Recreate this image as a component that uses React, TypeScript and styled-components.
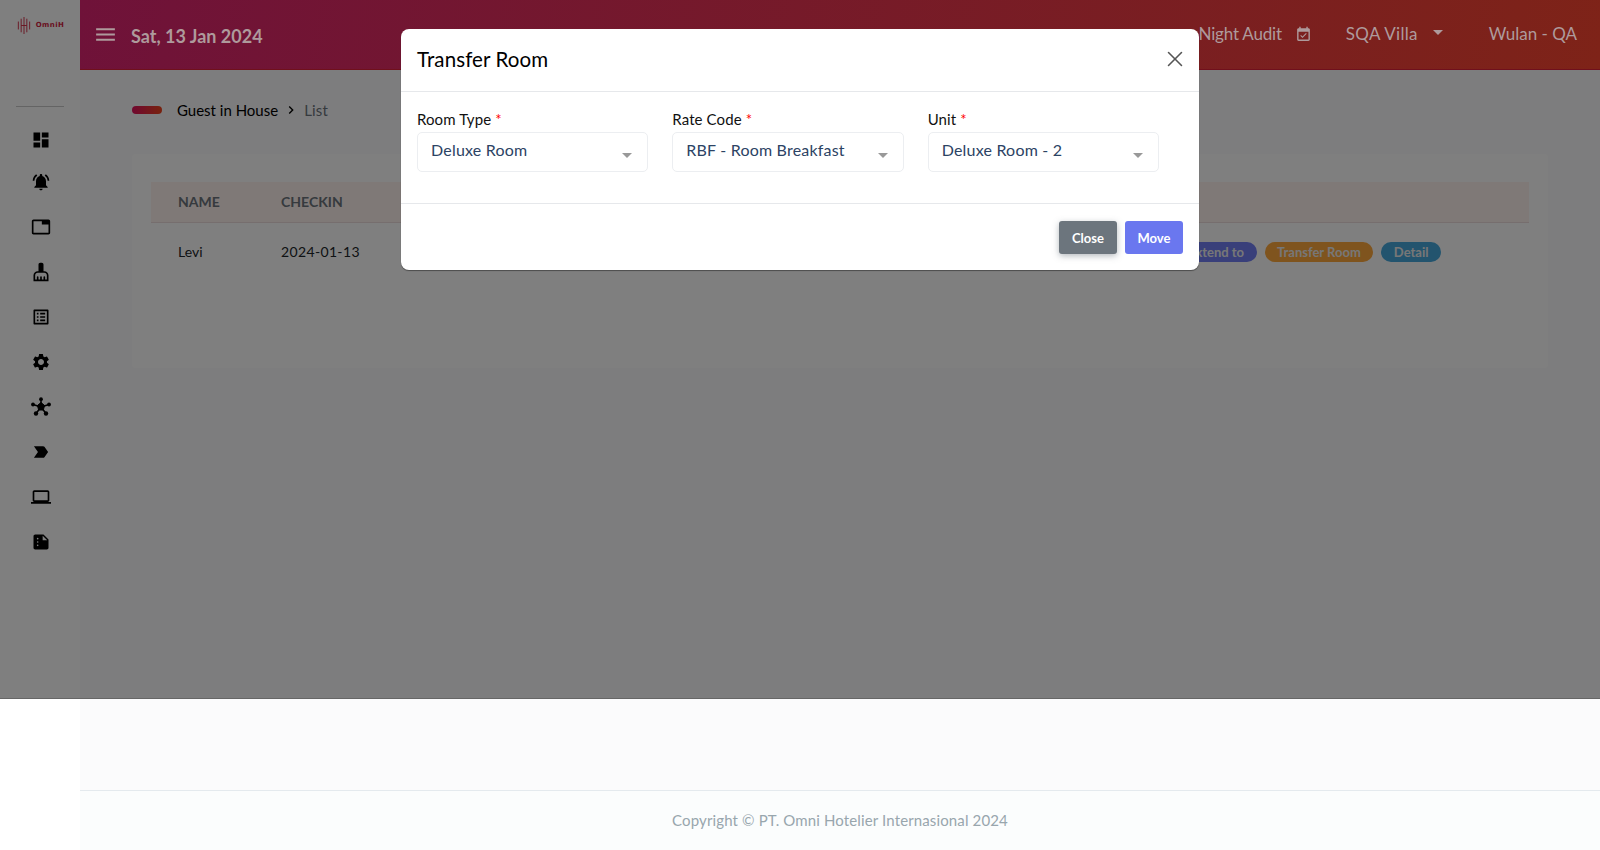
import styled, { createGlobalStyle } from "styled-components";
import { X } from "lucide-react";
import {
  MdChevronRight,
  MdCleaningServices,
  MdDashboard,
  MdEventAvailable,
  MdLabelImportant,
  MdLaptop,
  MdListAlt,
  MdMenu,
  MdNotificationsActive,
  MdSettings,
  MdSummarize,
  MdTab,
} from "react-icons/md";

const GlobalStyle = createGlobalStyle`
  * { box-sizing: border-box; }
  html, body { margin: 0; padding: 0; background: #fff; }
  body { font-family: "Lato", "Noto Sans", sans-serif; color: #212529; }
`;

const Page = styled.div`
  position: relative;
  display: flex;
  width: 1600px;
  height: 850px;
  overflow: hidden;
`;

const Sidebar = styled.aside`
  display: flex;
  flex-direction: column;
  align-items: center;
  width: 80px;
  flex-shrink: 0;
  background: #fff;
`;

const Logo = styled.div`
  display: flex;
  align-items: center;
  gap: 4px;
  height: 50px;
  color: #d2233f;
`;

const LogoText = styled.span`
  font-family: "DejaVu Sans", sans-serif;
  font-size: 7px;
  font-weight: 700;
  letter-spacing: 0.4px;
`;

const SideDivider = styled.hr`
  width: 48px;
  margin: 56px 0 11px;
  border: 0;
  border-top: 1px solid #c8c8c8;
`;

const SideIcon = styled.div`
  display: flex;
  align-items: center;
  justify-content: center;
  height: 45px;
  width: 100%;
  padding-left: 2px;
  font-size: 20px;
  color: #000;

  ${SideDivider} + & {
    height: 41px;
    padding-top: 2px;
  }
`;

const Main = styled.div`
  display: flex;
  flex: 1;
  flex-direction: column;
  min-width: 0;
  background: #fbfbfc;
`;

const TopBar = styled.header`
  position: relative;
  z-index: 20;
  display: flex;
  align-items: center;
  height: 70px;
  padding: 0 23px 0 16px;
  background: linear-gradient(100deg, #6f1239 0%, #7e2318 100%);
  border-bottom: 1px solid #70101c;
  color: #ae9a9c;
`;

const MenuButton = styled.div`
  display: flex;
  margin-left: -3px;
  font-size: 25px;
`;

const DateText = styled.span`
  margin: 3px 0 0 13px;
  font-size: 18px;
  font-weight: 700;
`;

const TopRight = styled.div`
  display: flex;
  align-items: center;
  margin-left: auto;
  margin-top: -3px;
  font-size: 17px;
`;

const AuditText = styled.span`
  letter-spacing: -0.2px;
`;

const VillaText = styled.span`
  letter-spacing: 0.3px;
`;

const AuditIcon = styled.span`
  display: flex;
  margin: 3px 34px 0 13px;
  font-size: 17px;
`;

const Caret = styled.span`
  width: 0;
  height: 0;
  margin: 0 46px 2px 15px;
  border-left: 5px solid transparent;
  border-right: 5px solid transparent;
  border-top: 5px solid currentColor;
`;

const Content = styled.main`
  flex: 1;
  padding: 30px 52px 0 52px;
`;

const Crumbs = styled.div`
  display: flex;
  align-items: center;
  height: 20px;
  font-size: 15px;
  color: #000;
`;

const CrumbPill = styled.span`
  width: 30px;
  height: 8px;
  margin-right: 15px;
  border-radius: 4px;
  background: linear-gradient(90deg, #e0115f, #f0451d);
`;

const CrumbSeparator = styled.span`
  display: flex;
  margin: 0 5px;
  font-size: 16px;
`;

const CrumbCurrent = styled.span`
  letter-spacing: 0.2px;
  color: #6c757d;
`;

const Card = styled.section`
  height: 214px;
  margin-top: 34px;
  padding: 28px 19px;
  background: #fff;
  border-radius: 4px;
`;

const TableHead = styled.div`
  display: grid;
  grid-template-columns: 103px 1fr;
  align-items: center;
  height: 41px;
  padding: 0 0 2px 27px;
  background: #fff2ee;
  border-bottom: 1px solid #ecdcdc;
  font-size: 14px;
  font-weight: 700;
  color: #6c757d;
`;

const TableRow = styled.div`
  display: grid;
  grid-template-columns: 103px 1fr auto;
  align-items: center;
  height: 56px;
  padding: 0 88px 0 27px;
  font-size: 14px;
  color: #212529;
`;

const DateCell = styled.span`
  letter-spacing: 0.35px;
`;

const Badges = styled.div`
  display: flex;
  gap: 8px;
  margin-top: 2px;
`;

const Badge = styled.span<{ $bg: string }>`
  display: flex;
  align-items: center;
  height: 20px;
  padding: 0 12.5px;
  border-radius: 10px;
  background: ${({ $bg }) => $bg};
  color: #eee;
  font-size: 13px;
  font-weight: 700;
`;

const Footer = styled.footer`
  display: flex;
  align-items: center;
  justify-content: center;
  height: 60px;
  padding-bottom: 2px;
  background: #fbfdfd;
  border-top: 1px solid #e4eaee;
  font-size: 15px;
  letter-spacing: 0.13px;
  color: #98a6ad;
`;

const Backdrop = styled.div`
  position: absolute;
  top: 0;
  left: 0;
  right: 0;
  z-index: 10;
  height: 699px;
  background: rgba(0, 0, 0, 0.5);
  border-bottom: 1px solid #666;
`;

const Modal = styled.div`
  position: absolute;
  top: 29px;
  left: 401px;
  z-index: 30;
  width: 798px;
  height: 241px;
  background: #fff;
  border-radius: 8px;
  box-shadow: 0 1px 1px rgba(0, 0, 0, 0.4);
`;

const ModalHeader = styled.div`
  display: flex;
  align-items: center;
  justify-content: space-between;
  height: 63px;
  padding: 0 11px 3px 16px;
  border-bottom: 1px solid #e6e8eb;
`;

const ModalTitle = styled.h5`
  margin: 0;
  font-size: 20.5px;
  font-weight: 400;
  letter-spacing: 0.1px;
  color: #000;
`;

const CloseIcon = styled.span`
  display: flex;
  color: #555;
`;

const ModalBody = styled.div`
  display: grid;
  grid-template-columns: repeat(3, 1fr);
  height: 112px;
  padding: 16px 16px 0;
  border-bottom: 1px solid #e6e8eb;
`;

const Field = styled.div`
  padding-right: 24px;
`;

const Label = styled.label`
  display: block;
  height: 24px;
  font-size: 15px;
  line-height: 22px;
  letter-spacing: 0.1px;
  color: #111;
`;

const Required = styled.span`
  color: #f00;
`;

const SelectBox = styled.div`
  display: flex;
  align-items: center;
  justify-content: space-between;
  height: 40px;
  padding: 0 15px 6px 13px;
  background: #fff;
  border: 1px solid #eceef1;
  border-radius: 5px;
  font-size: 16px;
  letter-spacing: 0.2px;
  color: #2c4364;
`;

const SelectCaret = styled.span`
  width: 0;
  height: 0;
  margin-top: 13px;
  border-left: 5px solid transparent;
  border-right: 5px solid transparent;
  border-top: 5px solid #999;
`;

const ModalFooter = styled.div`
  display: flex;
  justify-content: flex-end;
  gap: 8px;
  padding: 17px 16px 0;
`;

const Button = styled.button<{ $bg: string; $shadow?: boolean }>`
  width: 58px;
  height: 33px;
  padding: 0;
  border: 0;
  border-radius: 3px;
  background: ${({ $bg }) => $bg};
  box-shadow: ${({ $shadow }) => ($shadow ? "0 2px 6px rgba(108, 117, 125, 0.5)" : "none")};
  color: #fff;
  font-family: inherit;
  font-size: 13px;
  font-weight: 700;
`;

const fields = [
  { label: "Room Type", value: "Deluxe Room" },
  { label: "Rate Code", value: "RBF - Room Breakfast" },
  { label: "Unit", value: "Deluxe Room - 2" },
];

function LogoMark() {
  const bars = [
    [1, 8, 14],
    [6, 3, 24],
    [11, 0, 30],
    [16, 3, 24],
    [21, 8, 14],
  ];
  return (
    <svg width="16" height="17" viewBox="0 0 22 30" fill="none" stroke="currentColor" strokeWidth="1.6">
      {bars.map(([x, y, h]) => (
        <line key={x} x1={x} x2={x} y1={y} y2={y + h} />
      ))}
      <line x1="6" x2="16" y1="15" y2="15" />
    </svg>
  );
}

function NodesIcon() {
  return (
    <svg width="20" height="20" viewBox="0 0 20 20" fill="#000" stroke="#000">
      <path d="M10 2.5V10M2 7.5L10 10M18 7.5L10 10M5 16.5L10 10M15 16.5L10 10" strokeWidth="1.6" />
      <path d="M10 5.5l3.6 3-1.3 4.5H7.7L6.4 8.5z" strokeWidth="1" />
      <circle cx="10" cy="2.2" r="1.9" stroke="none" />
      <circle cx="2" cy="7.5" r="1.9" stroke="none" />
      <circle cx="18" cy="7.5" r="1.9" stroke="none" />
      <circle cx="5" cy="16.5" r="2.2" stroke="none" />
      <circle cx="15" cy="16.5" r="2.2" stroke="none" />
    </svg>
  );
}

export default function App() {
  return (
    <Page>
      <GlobalStyle />
      <Sidebar>
        <Logo>
          <LogoMark />
          <LogoText>OmniH</LogoText>
        </Logo>
        <SideDivider />
        <SideIcon><MdDashboard /></SideIcon>
        <SideIcon><MdNotificationsActive /></SideIcon>
        <SideIcon><MdTab /></SideIcon>
        <SideIcon><MdCleaningServices /></SideIcon>
        <SideIcon><MdListAlt /></SideIcon>
        <SideIcon><MdSettings /></SideIcon>
        <SideIcon><NodesIcon /></SideIcon>
        <SideIcon><MdLabelImportant /></SideIcon>
        <SideIcon><MdLaptop /></SideIcon>
        <SideIcon><MdSummarize /></SideIcon>
      </Sidebar>

      <Main>
        <TopBar>
          <MenuButton><MdMenu /></MenuButton>
          <DateText>Sat, 13 Jan 2024</DateText>
          <TopRight>
            <AuditText>Night Audit</AuditText>
            <AuditIcon><MdEventAvailable /></AuditIcon>
            <VillaText>SQA Villa</VillaText>
            <Caret />
            <span>Wulan - QA</span>
          </TopRight>
        </TopBar>

        <Content>
          <Crumbs>
            <CrumbPill />
            Guest in House
            <CrumbSeparator><MdChevronRight /></CrumbSeparator>
            <CrumbCurrent>List</CrumbCurrent>
          </Crumbs>
          <Card>
            <TableHead>
              <span>NAME</span>
              <span>CHECKIN</span>
            </TableHead>
            <TableRow>
              <span>Levi</span>
              <DateCell>2024-01-13</DateCell>
              <Badges>
                <Badge $bg="#727ff5">Extend to</Badge>
                <Badge $bg="#ffa83c">Transfer Room</Badge>
                <Badge $bg="#47a9dc">Detail</Badge>
              </Badges>
            </TableRow>
          </Card>
        </Content>

        <Footer>Copyright © PT. Omni Hotelier Internasional 2024</Footer>
      </Main>

      <Backdrop />

      <Modal>
        <ModalHeader>
          <ModalTitle>Transfer Room</ModalTitle>
          <CloseIcon><X size={26} strokeWidth={1.4} /></CloseIcon>
        </ModalHeader>
        <ModalBody>
          {fields.map((field) => (
            <Field key={field.label}>
              <Label>
                {field.label} <Required>*</Required>
              </Label>
              <SelectBox>
                {field.value}
                <SelectCaret />
              </SelectBox>
            </Field>
          ))}
        </ModalBody>
        <ModalFooter>
          <Button $bg="#6c757d" $shadow>Close</Button>
          <Button $bg="#6a77ef">Move</Button>
        </ModalFooter>
      </Modal>
    </Page>
  );
}
